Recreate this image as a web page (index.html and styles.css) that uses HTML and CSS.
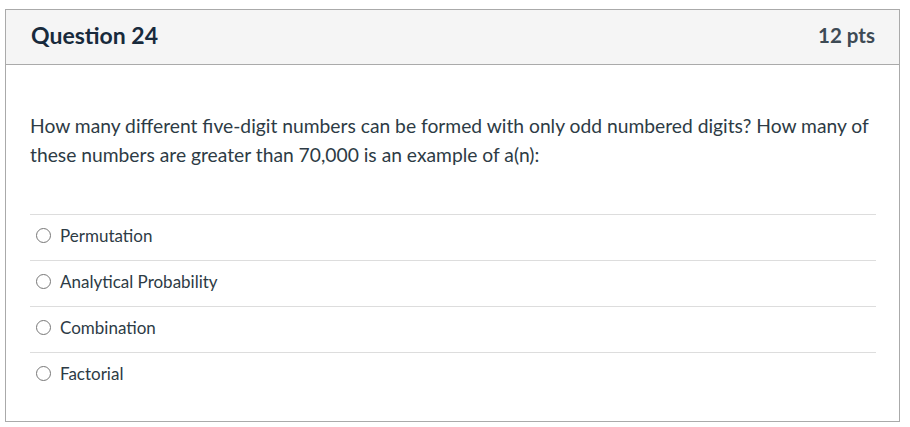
FILE: index.html
```html
<!DOCTYPE html>
<html>
<head>
<meta charset="utf-8">
<link rel="stylesheet" href="styles.css">
</head>
<body>
<div class="card">
  <div class="header">
    <h2 class="title">Question 24</h2>
    <span class="pts">12 pts</span>
  </div>
  <div class="content">
    <p class="question">How many different five-digit numbers can be formed with only odd numbered digits? How many of these numbers are greater than 70,000 is an example of a(n):</p>
    <div class="answers">
      <label class="answer"><span class="radio"></span>Permutation</label>
      <label class="answer"><span class="radio"></span>Analytical Probability</label>
      <label class="answer"><span class="radio"></span>Combination</label>
      <label class="answer"><span class="radio"></span>Factorial</label>
    </div>
  </div>
</div>
</body>
</html>
```
FILE: styles.css
```css
html, body {
  margin: 0;
  padding: 0;
  background: #fff;
}
body {
  font-family: Lato, "Open Sans", sans-serif;
  color: #2d3b45;
}
.card {
  margin: 9px 0 0 5px;
  width: 895px;
  height: 413px;
  box-sizing: border-box;
  border: 1px solid #aaaaaa;
}
.header {
  height: 55px;
  box-sizing: border-box;
  background: #f5f5f5;
  border-bottom: 1px solid #aaaaaa;
  display: flex;
  align-items: center;
  justify-content: space-between;
  padding: 0 24px 4px 25px;
}
.title {
  margin: 0;
  font-size: 23px;
  font-weight: 700;
  color: #182a3c;
}
.pts {
  font-size: 20.5px;
  font-weight: 700;
  color: #3d4a54;
}
.content {
  padding: 0 23px 0 24px;
}
.question {
  margin: 46px 0 0;
  font-size: 19.25px;
  line-height: 29px;
  color: #2d3b45;
}
.answers {
  margin-top: 45px;
}
.answer {
  display: flex;
  align-items: center;
  height: 41px;
  padding: 0 0 4px 6px;
  border-top: 1px solid #dddddd;
  font-size: 17px;
  color: #2d3b45;
  gap: 9px;
}
.radio {
  width: 15px;
  height: 15px;
  border: 1.5px solid #777;
  border-radius: 50%;
  box-sizing: border-box;
  flex: none;
}
```
